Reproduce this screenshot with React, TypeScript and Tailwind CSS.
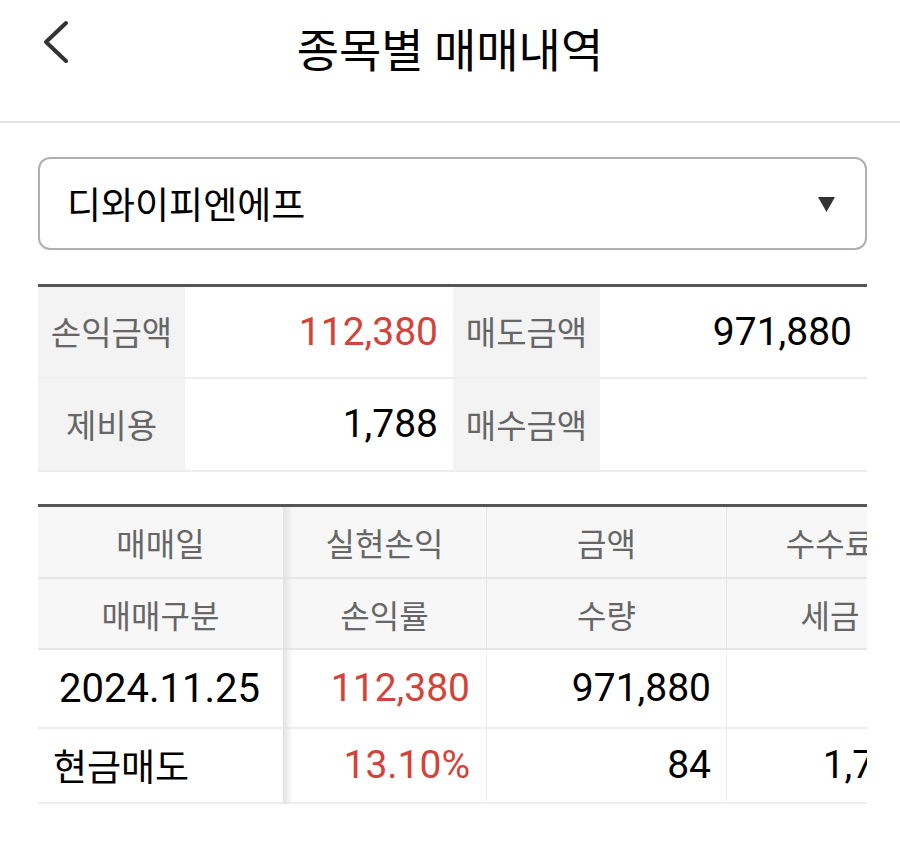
import React from "react";

const KR = "font-['Noto_Sans_CJK_KR','Noto_Sans',sans-serif]";
const NUM = "font-['Roboto','Noto_Sans_CJK_KR',sans-serif]";

const summary = [
  [
    { label: "손익금액", value: "112,380", red: true },
    { label: "매도금액", value: "971,880", red: false },
  ],
  [
    { label: "제비용", value: "1,788", red: false },
    { label: "매수금액", value: "", red: false },
  ],
];

const HeaderCell = ({ children, last }: { children: React.ReactNode; last?: boolean }) => (
  <div
    className={`flex items-center justify-center bg-[#f7f7f7] text-[32px] text-[#666] ${KR} ${
      last ? "" : "border-r border-[#e6e6e6]"
    }`}
  >
    {children}
  </div>
);

export default function App() {
  return (
    <div className="w-[900px] min-h-[866px] bg-white">
      {/* header */}
      <div className="relative h-[123px] border-b-2 border-[#e3e3e3]">
        <button className="absolute left-[40px] top-[17px]">
          <svg width="30" height="50" viewBox="0 0 30 50" fill="none">
            <path d="M26 6 L6 25 L26 44" stroke="#333" strokeWidth="4" strokeLinecap="round" strokeLinejoin="round" />
          </svg>
        </button>
        <div className="flex h-[94px] items-center justify-center">
          <h1 className={`text-[46px] font-normal text-black ${KR}`}>종목별 매매내역</h1>
        </div>
      </div>

      <div className="pl-[38px] pr-[33px]">
        {/* stock select */}
        <div className="mt-[34px] flex h-[93px] items-center justify-between rounded-[12px] border-2 border-[#b0b0b0] pl-[27px] pr-[30px]">
          <span className={`text-[37px] text-black ${KR}`}>디와이피엔에프</span>
          <svg width="17" height="16" viewBox="0 0 17 16">
            <polygon points="0,1 17,1 8.5,16" fill="#333" />
          </svg>
        </div>

        {/* summary */}
        <div className="mt-[34px] border-t-[3px] border-[#555]">
          {summary.map((row, i) => (
            <div key={i} className={`grid grid-cols-[147px_268px_147px_1fr] border-b-2 border-[#eeeeee] ${i === 0 ? "h-[92px]" : "h-[93px]"}`}>
              {row.map((c) => (
                <React.Fragment key={c.label}>
                  <div className={`flex items-center justify-center bg-[#f3f3f3] text-[33px] text-[#666] ${KR}`}>{c.label}</div>
                  <div className={`flex items-center justify-end pr-[15px] text-[39px] ${NUM} ${c.red ? "text-[#d2433a]" : "text-black"}`}>
                    {c.value}
                  </div>
                </React.Fragment>
              ))}
            </div>
          ))}
        </div>

        {/* history table */}
        <div className="mt-[32px] flex border-t-[3px] border-[#555]">
          {/* frozen column */}
          <div className="w-[245px] shrink-0">
            <div className={`flex h-[72px] items-center justify-center border-b-2 border-[#e6e6e6] bg-[#f7f7f7] text-[32px] text-[#666] ${KR}`}>매매일</div>
            <div className={`flex h-[71px] items-center justify-center border-b-2 border-[#e6e6e6] bg-[#f7f7f7] text-[32px] text-[#666] ${KR}`}>매매구분</div>
            <div className={`flex h-[79px] items-center border-b-2 border-[#eeeeee] pl-[21px] text-[40px] text-black ${NUM}`}>2024.11.25</div>
            <div className={`flex h-[75px] items-center border-b-2 border-[#eeeeee] pl-[15px] text-[37px] text-black ${KR}`}>현금매도</div>
          </div>

          {/* scrollable columns */}
          <div className="relative flex-1 overflow-hidden">
            <div className="pointer-events-none absolute inset-y-0 left-0 z-10 w-[10px] bg-gradient-to-r from-[#e2e2e2] to-transparent" />
            <div className="w-[650px]">
              <div className="grid h-[72px] grid-cols-[204px_240px_206px] border-b-2 border-[#e6e6e6]">
                <HeaderCell>실현손익</HeaderCell>
                <HeaderCell>금액</HeaderCell>
                <HeaderCell last>수수료</HeaderCell>
              </div>
              <div className="grid h-[71px] grid-cols-[204px_240px_206px] border-b-2 border-[#e6e6e6]">
                <HeaderCell>손익률</HeaderCell>
                <HeaderCell>수량</HeaderCell>
                <HeaderCell last>세금</HeaderCell>
              </div>
              <div className={`grid h-[79px] grid-cols-[204px_240px_206px] border-b-2 border-[#eeeeee] text-[39px] ${NUM}`}>
                <div className="flex items-center justify-end border-r border-[#ececec] pr-[16px] text-[#d2433a]">112,380</div>
                <div className="flex items-center justify-end border-r border-[#ececec] pr-[15px] text-black">971,880</div>
                <div className="flex items-center justify-end pr-[15px] text-black"></div>
              </div>
              <div className={`grid h-[75px] grid-cols-[204px_240px_206px] border-b-2 border-[#eeeeee] text-[39px] ${NUM}`}>
                <div className="flex items-center justify-end border-r border-[#ececec] pr-[16px] text-[#d2433a]">13.10%</div>
                <div className="flex items-center justify-end border-r border-[#ececec] pr-[15px] text-black">84</div>
                <div className="flex items-center justify-end pr-[15px] text-black">1,788</div>
              </div>
            </div>
          </div>
        </div>
      </div>
    </div>
  );
}
